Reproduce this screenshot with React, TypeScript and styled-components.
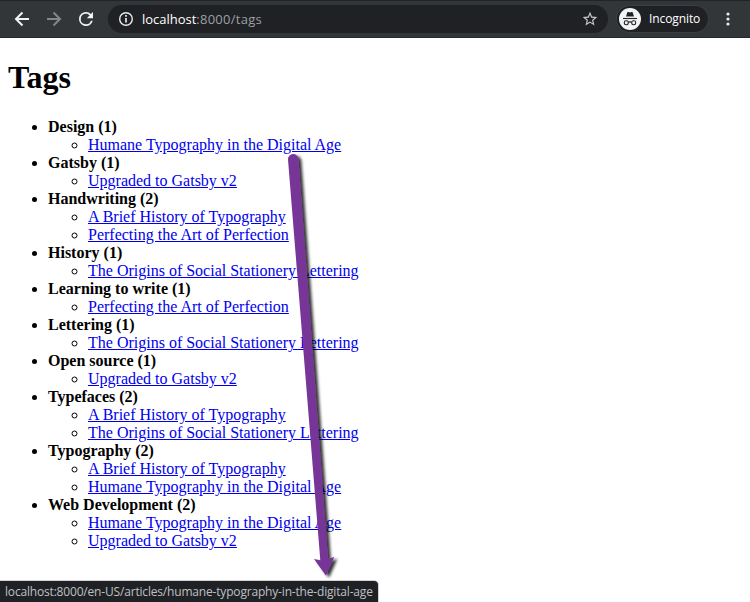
import React from 'react';
import styled, { createGlobalStyle } from 'styled-components';

const GlobalStyle = createGlobalStyle`
  html, body { margin: 0; padding: 0; background: #fff; }
  body { overflow: hidden; }
  * { box-sizing: border-box; }
`;

const Window = styled.div`
  position: relative;
  width: 750px;
  height: 602px;
  overflow: hidden;
  background: #fff;
`;

const Toolbar = styled.header`
  display: flex;
  align-items: center;
  height: 38px;
  padding: 0 12px;
  background: #323639;
  border-top: 1px solid #222528;
  border-bottom: 1px solid #25282b;
  font-family: 'Open Sans', 'Noto Sans', sans-serif;
`;

const NavButton = styled.span<{ $dim?: boolean }>`
  display: flex;
  flex: none;
  width: 20px;
  height: 20px;
  margin-right: 12px;
  color: ${(p) => (p.$dim ? '#83868a' : '#f1f3f4')};
`;

const AddressBar = styled.div`
  display: flex;
  align-items: center;
  width: 500px;
  height: 28px;
  padding: 0 10px 0 9px;
  border-radius: 14px;
  background: #202124;
  color: #e8eaed;
`;

const Url = styled.span`
  flex: 1;
  margin-left: 7px;
  font-size: 13px;
  line-height: 18px;
  letter-spacing: 0.26px;
  color: #9aa0a6;
  white-space: nowrap;
`;

const Host = styled.span`
  color: #fff;
  letter-spacing: -0.02px;
`;

const Profile = styled.div`
  display: flex;
  align-items: center;
  width: 91px;
  height: 26px;
  margin-left: 9px;
  padding-left: 2px;
  border-radius: 13px;
  background: #202124;
  box-shadow: 0 0 0 1px #3a3d41;
`;

const ProfileName = styled.span`
  margin-left: 8px;
  font-size: 12px;
  letter-spacing: -0.1px;
  line-height: 18px;
  color: #fff;
`;

const MenuButton = styled.span`
  display: flex;
  margin-left: 11px;
`;

const Page = styled.main`
  padding: 0 8px;
  font-family: 'Liberation Serif', 'Times New Roman', serif;
  font-size: 16px;
  line-height: 18px;
  color: #000;
`;

const Title = styled.h1`
  margin: 0;
  padding-top: 21px;
  height: 80px;
  font-size: 32px;
  line-height: 36px;
  font-weight: 700;
`;

const TagList = styled.ul`
  margin: 0;
  padding-left: 40px;
  list-style: disc;
`;

const TagItem = styled.li`
  font-size: 16px;
`;

const TagName = styled.strong`
  font-weight: 700;
`;

const ArticleList = styled.ul`
  margin: 0;
  padding-left: 40px;
  list-style: circle;
`;

const ArticleLink = styled.a`
  color: #0000ee;
  text-decoration: underline;
`;

const PointerArrow = styled.svg`
  position: absolute;
  left: 270px;
  top: 140px;
  pointer-events: none;
`;

const StatusBubble = styled.div`
  position: absolute;
  left: 0;
  bottom: 0;
  width: 378px;
  height: 21px;
  padding-left: 5px;
  border-radius: 0 4px 0 0;
  background: #202124;
  box-shadow: 0 0 0 1px #d2d3d4;
  font-family: 'Open Sans', 'Noto Sans', sans-serif;
  font-size: 12px;
  line-height: 21px;
  letter-spacing: -0.18px;
  color: #bdc1c6;
  white-space: nowrap;
`;

const HUMANE = 'Humane Typography in the Digital Age';
const GATSBY = 'Upgraded to Gatsby v2';
const BRIEF = 'A Brief History of Typography';
const PERFECT = 'Perfecting the Art of Perfection';
const ORIGINS = 'The Origins of Social Stationery Lettering';

const tags: { name: string; articles: string[] }[] = [
  { name: 'Design', articles: [HUMANE] },
  { name: 'Gatsby', articles: [GATSBY] },
  { name: 'Handwriting', articles: [BRIEF, PERFECT] },
  { name: 'History', articles: [ORIGINS] },
  { name: 'Learning to write', articles: [PERFECT] },
  { name: 'Lettering', articles: [ORIGINS] },
  { name: 'Open source', articles: [GATSBY] },
  { name: 'Typefaces', articles: [BRIEF, ORIGINS] },
  { name: 'Typography', articles: [BRIEF, HUMANE] },
  { name: 'Web Development', articles: [HUMANE, GATSBY] },
];

const BackIcon = () => (
  <svg width="20" height="20" viewBox="0 0 20 20" fill="none" stroke="currentColor" strokeWidth="2">
    <path d="M17 10H4.5M10.5 3.5L4 10l6.5 6.5" />
  </svg>
);

const ForwardIcon = () => (
  <svg width="20" height="20" viewBox="0 0 20 20" fill="none" stroke="currentColor" strokeWidth="2">
    <path d="M3 10h12.500M9.500 3.500L16 10l-6.500 6.500" />
  </svg>
);

const ReloadIcon = () => (
  <svg width="20" height="20" viewBox="0 0 20 20" fill="currentColor">
    <path
      transform="translate(-0.500 -0.500) scale(.875)"
      d="M17.650 6.350A7.960 7.960 0 0 0 12 4a8 8 0 1 0 7.730 10h-2.080A6 6 0 1 1 12 6c1.660 0 3.140.690 4.220 1.780L13 11h7V4z"
    />
  </svg>
);

const InfoIcon = () => (
  <svg width="18" height="18" viewBox="0 0 18 18" fill="none" stroke="currentColor">
    <circle cx="9" cy="9" r="6.300" strokeWidth="1.400" />
    <path d="M9 8v4.500M9 5v1.700" strokeWidth="1.700" />
  </svg>
);

const StarIcon = () => (
  <svg width="16" height="16" viewBox="1 1 22 22" fill="#c4c7ca">
    <path d="M22 9.240l-7.190-.620L12 2 9.190 8.630 2 9.240l5.460 4.730L5.820 21 12 17.270 18.180 21l-1.630-7.030zM12 15.400l-3.760 2.270 1-4.280-3.320-2.880 4.380-.380L12 6.100l1.710 4.040 4.380.380-3.320 2.880 1 4.280z" />
  </svg>
);

const IncognitoIcon = () => (
  <svg width="22" height="22" viewBox="0 0 22 22">
    <circle cx="11" cy="11" r="11" fill="#f1f3f4" />
    <path d="M7 8.500l1.300-4c.2-.600.700-.600 1.200-.400l1.500.400 1.500-.400c.500-.200 1-.2 1.200.400l1.300 4z" fill="#202124" />
    <path d="M4 10.500h14" stroke="#202124" strokeWidth="1.100" />
    <g fill="none" stroke="#202124" strokeWidth="1.100">
      <rect x="5.300" y="12.700" width="4" height="4" rx="1.700" />
      <rect x="12.700" y="12.700" width="4" height="4" rx="1.700" />
      <path d="M9.300 14.300q1.700-.8 3.400 0" />
    </g>
  </svg>
);

const MoreIcon = () => (
  <svg width="18" height="18" viewBox="0 0 18 18" fill="#e8eaed">
    <circle cx="9" cy="4" r="1.600" />
    <circle cx="9" cy="9" r="1.600" />
    <circle cx="9" cy="14" r="1.600" />
  </svg>
);

export default function App() {
  return (
    <Window>
      <GlobalStyle />
      <Toolbar>
        <NavButton><BackIcon /></NavButton>
        <NavButton $dim><ForwardIcon /></NavButton>
        <NavButton><ReloadIcon /></NavButton>
        <AddressBar>
          <InfoIcon />
          <Url><Host>localhost</Host>:8000/tags</Url>
          <StarIcon />
        </AddressBar>
        <Profile>
          <IncognitoIcon />
          <ProfileName>Incognito</ProfileName>
        </Profile>
        <MenuButton><MoreIcon /></MenuButton>
      </Toolbar>
      <Page>
        <Title>Tags</Title>
        <TagList>
          {tags.map((tag) => (
            <TagItem key={tag.name}>
              <TagName>{`${tag.name} (${tag.articles.length})`}</TagName>
              <ArticleList>
                {tag.articles.map((article) => (
                  <li key={article}><ArticleLink href="#">{article}</ArticleLink></li>
                ))}
              </ArticleList>
            </TagItem>
          ))}
        </TagList>
      </Page>
      <StatusBubble>localhost:8000/en-US/articles/humane-typography-in-the-digital-age</StatusBubble>
      <PointerArrow width="80" height="450" viewBox="270 140 80 450">
        <defs>
          <filter id="arrow-shadow" x="-50%" y="-10%" width="220%" height="120%">
            <feDropShadow dx="3" dy="2" stdDeviation="1.500" floodColor="#000" floodOpacity="0.800" />
          </filter>
        </defs>
        <path
          d="M288 159.500a5.200 5.200 0 0 1 10.400-.500L328 558.800L334.300 557L326 575.800L314 559L320.300 560.300Z"
          fill="#783698"
          filter="url(#arrow-shadow)"
        />
      </PointerArrow>
    </Window>
  );
}
